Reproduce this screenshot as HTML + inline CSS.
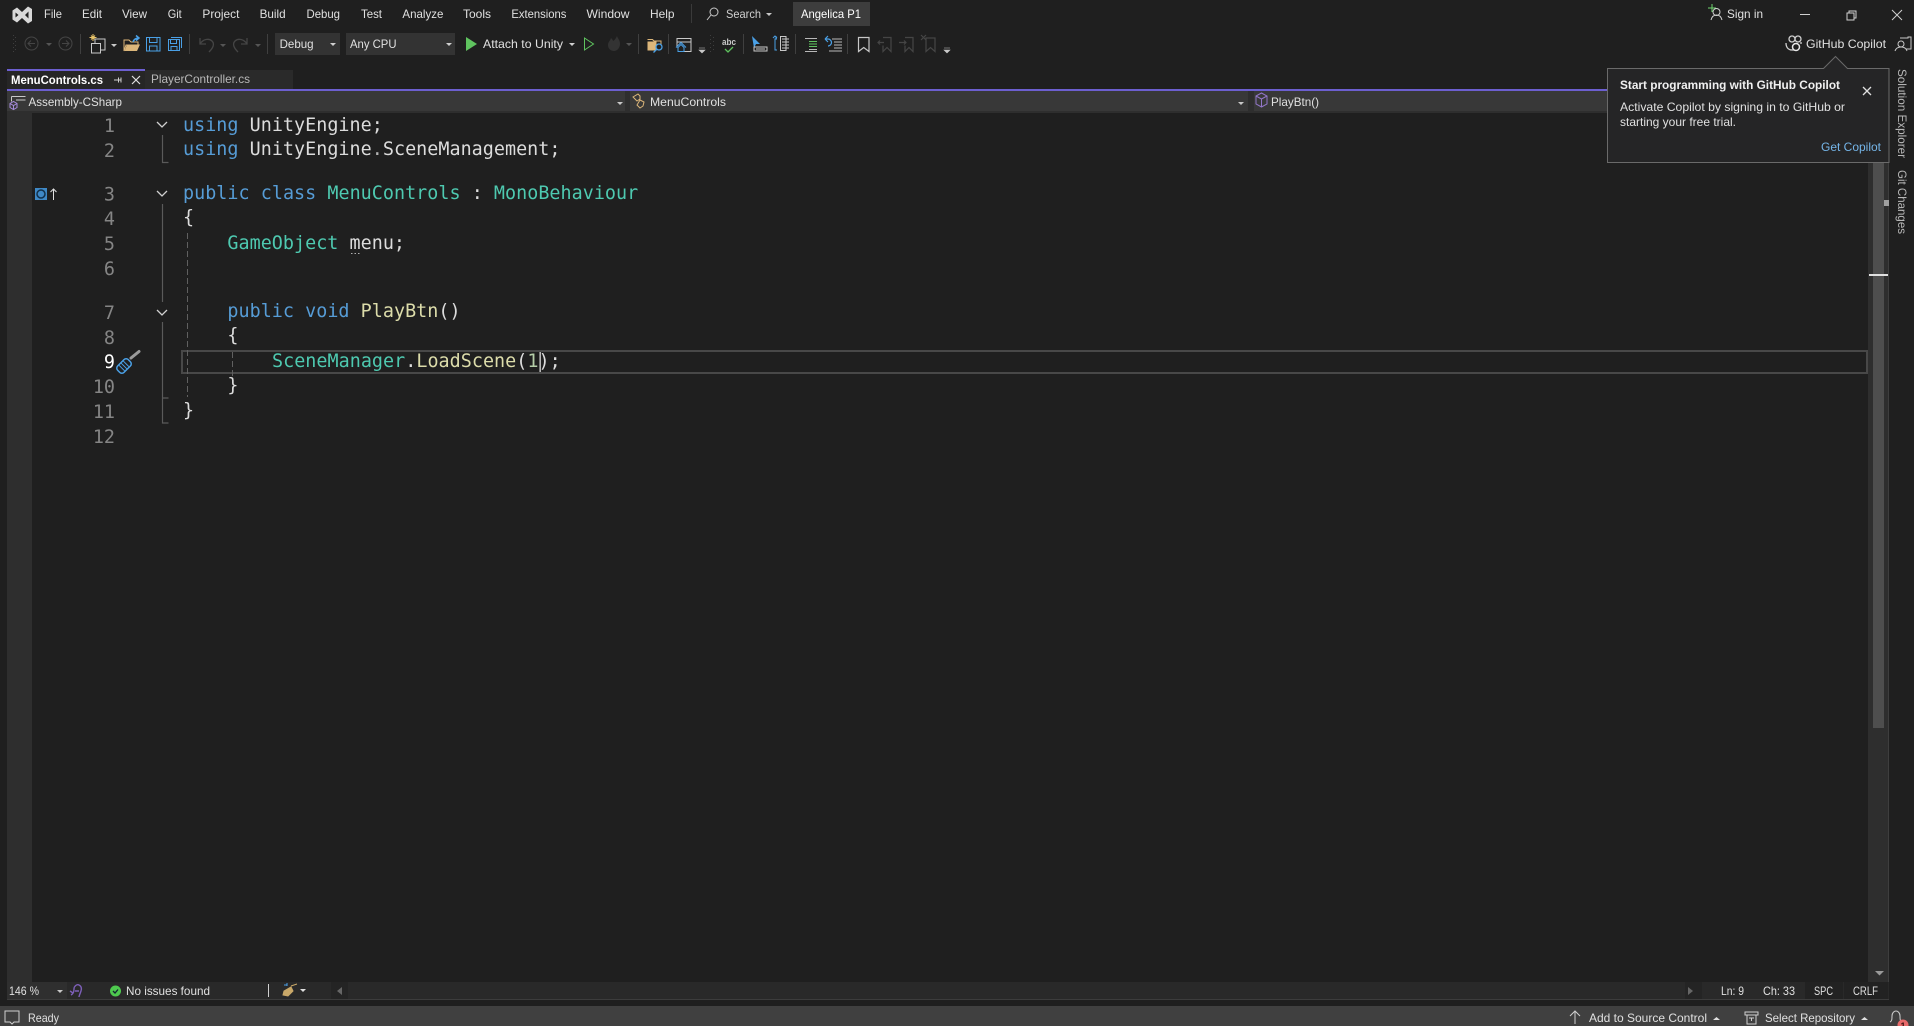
<!DOCTYPE html>
<html><head><meta charset="utf-8"><title>MenuControls.cs</title>
<style>
html,body{margin:0;padding:0;background:#1f1f1f;width:1914px;height:1026px;overflow:hidden}
svg{position:absolute;left:0;top:0;display:block}
text{font-family:"Liberation Sans",sans-serif;font-size:12px;fill:#e0e0e0;white-space:pre}
.m{font-family:"DejaVu Sans Mono","Liberation Mono",monospace;font-size:18.4px;fill:#dcdcdc;letter-spacing:.03px}
.n{font-family:"DejaVu Sans Mono","Liberation Mono",monospace;font-size:18.4px;fill:#858585;text-anchor:end}
.k{fill:#569cd6}.t{fill:#4ec9b0}.f{fill:#dcdcaa}.c{fill:#b5cea8}
.b{font-weight:bold}
</style></head><body>
<svg width="1914" height="1026" viewBox="0 0 1914 1026" xmlns="http://www.w3.org/2000/svg">
<rect width="1914" height="1026" fill="#1f1f1f"/>

<!-- logo -->
<path d="M12.500 10.500 L17 7.500 L22 12 L28 6.500 L32 9 V21 L28 23.500 L22 18 L17 22.500 L12.500 19.500Z" fill="#d8d8d8"/>
<path d="M15.500 12.500 V17.500 L18.500 15Z M25 15 L28.500 11.500 V18.500Z" fill="#1f1f1f"/>

<!-- menu -->
<text x="44" y="18" lengthAdjust="spacingAndGlyphs" textLength="18">File</text><text x="82" y="18" lengthAdjust="spacingAndGlyphs" textLength="20">Edit</text><text x="122" y="18" lengthAdjust="spacingAndGlyphs" textLength="25">View</text><text x="167.700" y="18" lengthAdjust="spacingAndGlyphs" textLength="14">Git</text><text x="202.400" y="18" lengthAdjust="spacingAndGlyphs" textLength="37">Project</text><text x="259.600" y="18" lengthAdjust="spacingAndGlyphs" textLength="26">Build</text><text x="306.500" y="18" lengthAdjust="spacingAndGlyphs" textLength="33.500">Debug</text><text x="361" y="18" lengthAdjust="spacingAndGlyphs" textLength="21">Test</text><text x="402.400" y="18" lengthAdjust="spacingAndGlyphs" textLength="41">Analyze</text><text x="463" y="18" lengthAdjust="spacingAndGlyphs" textLength="28">Tools</text><text x="511.400" y="18" lengthAdjust="spacingAndGlyphs" textLength="55">Extensions</text><text x="586.500" y="18" lengthAdjust="spacingAndGlyphs" textLength="43">Window</text><text x="650" y="18" lengthAdjust="spacingAndGlyphs" textLength="24.500">Help</text>
<rect x="691" y="4" width="1" height="19" fill="#3a3a3a"/>
<circle cx="714" cy="12" r="4" fill="none" stroke="#c8c8c8"/><path d="M711 15 L707 20" stroke="#c8c8c8" fill="none"/>
<text x="726" y="18" lengthAdjust="spacingAndGlyphs" textLength="35" style="fill:#d0d0d0">Search</text><path d="M766 13h6l-3 3z" fill="#c8c8c8"/>
<rect x="793" y="2" width="77" height="24" fill="#3d3d3d"/><text x="801" y="18" lengthAdjust="spacingAndGlyphs" textLength="60" style="fill:#fff">Angelica P1</text>

<!-- sign in / window -->
<path d="M1708 8h8M1712 4v8" stroke="#6fd66f" fill="none"/>
<circle cx="1716.500" cy="12" r="3.500" fill="none" stroke="#d0d0d0"/><path d="M1711 20c1-4 3-5 5.500-5s4.500 1 5.500 5" stroke="#d0d0d0" fill="none"/>
<text x="1727" y="18" lengthAdjust="spacingAndGlyphs" textLength="36">Sign in</text>
<path d="M1800 14.500h10" stroke="#d0d0d0"/>
<path d="M1847 13h7v7h-7zM1849 13v-2h7v7h-2" stroke="#d0d0d0" fill="none"/>
<path d="M1892 10l10 10M1902 10l-10 10" stroke="#d0d0d0" fill="none"/>

<!-- toolbar left -->
<g fill="#3f3f3f"><rect x="13" y="35" width="1" height="1"/><rect x="15" y="37" width="1" height="1"/><rect x="13" y="39" width="1" height="1"/><rect x="15" y="41" width="1" height="1"/><rect x="13" y="43" width="1" height="1"/><rect x="15" y="45" width="1" height="1"/><rect x="13" y="47" width="1" height="1"/><rect x="15" y="49" width="1" height="1"/><rect x="13" y="51" width="1" height="1"/></g>
<g fill="none" stroke="#454545"><circle cx="31.500" cy="43.500" r="6.500"/><path d="M35 43.500h-7M31 40.500l-3 3 3 3"/><circle cx="65.500" cy="43.500" r="6.500"/><path d="M62 43.500h7M66 40.500l3 3-3 3"/></g>
<path d="M46 43h6l-3 3z" fill="#555"/>
<rect x="80" y="34" width="1" height="20" fill="#3f3f3f"/>
<path d="M93 34v7M89.500 37.500h7M91 35.500l4 4M95 35.500l-4 4" stroke="#e8c46a" fill="none"/>
<path d="M95 39h10v11h-4M95 39v4" stroke="#c8c8c8" fill="none"/><rect x="91.500" y="43.500" width="9" height="9.500" fill="#1f1f1f" stroke="#c8c8c8"/>
<path d="M111 44h6l-3 3z" fill="#c8c8c8"/>
<path d="M124 40h5l2 2h7v3h-12l-2 6z" fill="none" stroke="#dcb67a"/><path d="M124.500 51l2.500-6.500h13l-3 6.500z" fill="#dcb67a"/>
<path d="M133 42c1-3 3-4 6-4M136 35.500l3 2.500-3 2.500" stroke="#4aa0e6" fill="none" stroke-width="1.500"/>
<path d="M146.500 37.500h13.500v13.500h-13.500zM149.500 37.500v5h7.500v-5M149.500 51v-5h7.500v5" stroke="#4aa0e6" fill="none"/>
<path d="M168.500 39.500h11v11h-11zM170.500 39.500v4h6v-4M171 50.500v-4h6v4M171 37.500h10.500v10.500" stroke="#4aa0e6" fill="none"/>
<rect x="189" y="34" width="1" height="20" fill="#3f3f3f"/>
<g stroke="#454545" fill="none" stroke-width="1.300"><path d="M200 38v6h6M200 44c3-5 9-6 12-3s1 7-3 11"/><path d="M247 38v6h-6M247 44c-3-5-9-6-12-3s-1 7 3 11"/></g>
<path d="M220 44h6l-3 3zM255 44h6l-3 3z" fill="#555"/>
<rect x="267" y="34" width="1" height="20" fill="#3f3f3f"/>

<!-- combos -->
<rect x="275" y="33" width="65" height="22" fill="#333"/><text x="279.600" y="48" lengthAdjust="spacingAndGlyphs" textLength="34">Debug</text><path d="M330 43h6l-3 3z" fill="#d0d0d0"/>
<rect x="346" y="33" width="109" height="22" fill="#333"/><text x="350" y="48" lengthAdjust="spacingAndGlyphs" textLength="46.500">Any CPU</text><path d="M446 43h6l-3 3z" fill="#d0d0d0"/>
<path d="M466 37l11 7-11 7z" fill="#5fc35f"/>
<text x="483" y="48" lengthAdjust="spacingAndGlyphs" textLength="80">Attach to Unity</text><path d="M569 43h6l-3 3z" fill="#d0d0d0"/>
<path d="M584.500 38l9 6-9 6z" fill="none" stroke="#5fc35f"/>
<path d="M617 36c1 3 3 4 3 8 0 4-3 7-6 7s-6-2-6-6c0-3 2-4 3-7 1 1 2 2 2 3 2-1 3-3 4-5z" fill="#333"/>
<path d="M626 43h6l-3 3z" fill="#555"/>
<rect x="638" y="34" width="1" height="20" fill="#3f3f3f"/>

<!-- toolbar right -->
<path d="M647.500 39.500h5l1.500 1.500h7v5" fill="none" stroke="#dcb67a"/><path d="M647.500 41.500h9v9h-9z" fill="#dcb67a"/>
<circle cx="659" cy="47" r="3" fill="#1f1f1f" stroke="#4aa0e6" stroke-width="1.300"/><path d="M657 49l-3.500 3.500" stroke="#4aa0e6" stroke-width="1.300"/>
<rect x="668" y="34" width="1" height="20" fill="#3f3f3f"/>
<path d="M682 51.500h9V38.500h-14v9M677 42h14" fill="none" stroke="#c8c8c8"/>
<path d="M678 51.500v-4l3-3 3 3v4z" fill="none" stroke="#4aa0e6"/><path d="M676 47.500l5-5 5 5" fill="none" stroke="#4aa0e6"/>
<path d="M699 48h6M699 50h6l-3 3z" fill="#c8c8c8" stroke="#c8c8c8" stroke-width=".6"/>
<g fill="#3f3f3f"><rect x="710" y="35" width="1" height="1"/><rect x="713" y="37" width="1" height="1"/><rect x="710" y="39" width="1" height="1"/><rect x="713" y="41" width="1" height="1"/><rect x="710" y="43" width="1" height="1"/><rect x="713" y="45" width="1" height="1"/><rect x="710" y="47" width="1" height="1"/><rect x="713" y="49" width="1" height="1"/><rect x="710" y="51" width="1" height="1"/></g>
<text x="722" y="45" lengthAdjust="spacingAndGlyphs" textLength="14" style="font-size:9.500px;font-weight:bold;fill:#c8c8c8">abc</text>
<path d="M725 49l3 3 5-5" fill="none" stroke="#5fc35f" stroke-width="1.300"/>
<rect x="743" y="34" width="1" height="20" fill="#3f3f3f"/>
<path d="M752 36l8 8h-4l-2 4z" fill="#4aa0e6"/><path d="M754 47h13v4h-13z" fill="none" stroke="#c8c8c8"/><path d="M756 49h9" stroke="#c8c8c8"/>
<path d="M777 39h-2v11h2M776 36v3M773 38l2-2 2 2" fill="none" stroke="#4aa0e6"/><path d="M780.500 36.500h5.500v14h-5.500zM782 39h7M782 42h7M782 45h7M782 48h7" fill="none" stroke="#c8c8c8"/>
<rect x="795" y="34" width="1" height="20" fill="#3f3f3f"/>
<path d="M805 38.500h12M809 49.500h8M805 51.500h12" stroke="#b8b8b8" fill="none" stroke-width=".9"/><path d="M809 41.500h8M809 44h8M809 46.500h8" stroke="#5fc35f" fill="none" stroke-width=".9"/>
<path d="M832 39h10M834 42h8M834 45h8M834 48h8M829 51h13" stroke="#b8b8b8" fill="none" stroke-width=".9"/><path d="M825 39h3a3 3 0 0 1 0 7M825 39l3-3M825 39l3 3" stroke="#4aa0e6" fill="none" stroke-width="1.200"/>
<rect x="847" y="34" width="1" height="20" fill="#3f3f3f"/>
<path d="M858.500 37.500h10.500v14l-5.250-4-5.250 4z" fill="none" stroke="#c8c8c8" stroke-width="1.200"/>
<g fill="none" stroke="#454545" stroke-width="1.200"><path d="M883 37.500h8v14l-4-4-4 4v-6M884 42.500h-6M880 40.500l-2 2 2 2"/><path d="M905 37.500h8v14l-4-4-4 4v-6M899 42.500h7M904 40.500l2 2-2 2"/><path d="M926 38h9v13.500l-4.500-4-4.500 4zM921 35l5 5M926 35l-5 5"/></g>
<path d="M944 48h6M944 50h6l-3 3z" fill="#c8c8c8" stroke="#c8c8c8" stroke-width=".6"/>

<!-- copilot -->
<g fill="none" stroke="#d0d0d0" stroke-width="1.300"><circle cx="1792" cy="39" r="3"/><circle cx="1798" cy="39" r="3"/><path d="M1786 43c0 6 4 7 6 7h4"/><path d="M1801 42v2"/></g><circle cx="1796" cy="47" r="3.500" fill="#1f1f1f" stroke="#e8e8e8" stroke-width="1.500"/>
<text x="1806" y="48" lengthAdjust="spacingAndGlyphs" textLength="80">GitHub Copilot</text>
<path d="M1900 38h8v-1h3v12h-5" fill="none" stroke="#c8c8c8"/><circle cx="1901" cy="44" r="3" fill="#1f1f1f" stroke="#c8c8c8"/><path d="M1895 51c1-3 3-4 6-4s5 1 6 4" fill="none" stroke="#c8c8c8"/>

<!-- tabs -->
<rect x="7" y="69" width="138" height="20" fill="#262626"/><rect x="7" y="69" width="138" height="2" fill="#6c5fd0"/>
<rect x="145" y="70" width="148" height="19" fill="#2a2a2a"/>
<text x="11" y="84" class="b" lengthAdjust="spacingAndGlyphs" textLength="92" style="fill:#fff">MenuControls.cs</text>
<path d="M114 80h7M118.500 77.500v5M121 77.500v5" stroke="#d0d0d0" fill="none"/>
<path d="M132 76l8 8M140 76l-8 8" stroke="#e0e0e0" fill="none" stroke-width="1.200"/>
<text x="151" y="83" lengthAdjust="spacingAndGlyphs" textLength="99" style="fill:#b8b8b8">PlayerController.cs</text>
<rect x="7" y="89" width="1882" height="2" fill="#6c5fd0"/>

<!-- nav bar -->
<rect x="7" y="91" width="1882" height="22" fill="#2e2e2e"/>
<rect x="7" y="91" width="618" height="20" fill="#383838"/><rect x="630" y="91" width="618" height="20" fill="#383838"/><rect x="1254" y="91" width="620" height="20" fill="#383838"/>
<path d="M11.500 96.500h14M11.500 96.500v5M16 100h9.500" stroke="#c8c8c8" fill="none"/>
<path d="M10 103.500l3.500-2 3.500 2v4l-3.500 2-3.500-2zM10 103.500l3.500 2 3.500-2M13.500 105.500v4" fill="none" stroke="#a68bdc"/>
<text x="28.500" y="106" lengthAdjust="spacingAndGlyphs" textLength="93.500">Assembly-CSharp</text><path d="M617 102h6l-3 3z" fill="#c8c8c8"/>
<path d="M633 97l5-3 2 2v3l-3 2zM640 100l4 2-1 4-3 2-3-3z" fill="none" stroke="#dcb67a"/>
<text x="650" y="106" lengthAdjust="spacingAndGlyphs" textLength="76">MenuControls</text><path d="M1238 102h6l-3 3z" fill="#c8c8c8"/>
<path d="M1256 96l5.500-3 5.500 3v8l-5.500 3-5.500-3zM1256 96l5.500 3 5.500-3M1261.500 99v8" fill="none" stroke="#9276c8"/>
<text x="1271" y="106" lengthAdjust="spacingAndGlyphs" textLength="48">PlayBtn()</text>

<!-- gutter -->
<rect x="7" y="113" width="25" height="869" fill="#2e2e2e"/>

<!-- current line box -->
<rect x="182" y="351" width="1685" height="22" fill="none" stroke="#484848" stroke-width="2"/>

<!-- line numbers -->
<text class="n" x="115" y="132">1</text><text class="n" x="115" y="157">2</text><text class="n" x="115" y="200.500">3</text><text class="n" x="115" y="225">4</text><text class="n" x="115" y="250">5</text><text class="n" x="115" y="275">6</text><text class="n" x="115" y="319">7</text><text class="n" x="115" y="344">8</text><text class="n" x="115" y="368" style="fill:#fff">9</text><text class="n" x="115" y="393">10</text><text class="n" x="115" y="418">11</text><text class="n" x="115" y="443">12</text>

<!-- outline -->
<g fill="none" stroke="#d0d0d0" stroke-width="1.300"><path d="M157 122l5 5 5-5M157 191l5 5 5-5M157 310l5 5 5-5"/></g>
<g fill="none" stroke="#5a5a5a" stroke-width="1.200"><path d="M162.500 135v27.500h6M162.500 204v98M162.500 322v101h6M162.500 398h6"/></g>
<path d="M187.500 233V397M232.500 352V377" stroke="#606060" stroke-dasharray="6 3" fill="none"/>

<!-- code -->
<text class="m" x="183" y="131"><tspan class="k">using</tspan> UnityEngine;</text>
<text class="m" x="183" y="155"><tspan class="k">using</tspan> UnityEngine<tspan fill="#b4b4b4">.</tspan>SceneManagement;</text>
<text class="m" x="183" y="199"><tspan class="k">public</tspan> <tspan class="k">class</tspan> <tspan class="t">MenuControls</tspan> : <tspan class="t">MonoBehaviour</tspan></text>
<text class="m" x="183" y="223">{</text>
<text class="m" x="227.400" y="249"><tspan class="t">GameObject</tspan> menu;</text>
<path d="M351 253.500h1.500M354.500 253.500h1.500M358 253.500h1.500" stroke="#b0b0b0"/>
<text class="m" x="227.400" y="317"><tspan class="k">public</tspan> <tspan class="k">void</tspan> <tspan class="f">PlayBtn</tspan>()</text>
<text class="m" x="227.400" y="341">{</text>
<text class="m" x="272" y="367"><tspan class="t">SceneManager</tspan>.<tspan class="f">LoadScene</tspan>(<tspan class="c">1</tspan>);</text>
<rect x="539.500" y="352" width="1.300" height="20" fill="#dcdcdc"/>
<text class="m" x="227.400" y="391">}</text>
<text class="m" x="183" y="416">}</text>

<!-- screwdriver -->
<path d="M131 358L139 351.500" stroke="#9a9a9a" stroke-width="3" stroke-linecap="round" fill="none"/>
<g transform="rotate(45 124 366)"><rect x="119.500" y="358.500" width="9" height="15" rx="3" fill="#1f1f1f" stroke="#4aa0e6" stroke-width="1.500"/><path d="M120 363h8M120 366h8M120 369h8" stroke="#4aa0e6"/></g>

<!-- class marker -->
<rect x="35" y="188" width="12" height="12" fill="#3f88c5"/><circle cx="41" cy="194" r="4" fill="none" stroke="#12304a" stroke-width="1.500"/>
<path d="M53.500 200v-11M50.500 192l3-3 3 3" stroke="#e0e0e0" fill="none"/>

<!-- scrollbar -->
<rect x="1868" y="113" width="21" height="869" fill="#2e2e2e"/><rect x="1888" y="113" width="1" height="869" fill="#3e3e3e"/>
<rect x="1873" y="163" width="11" height="565" fill="#4e4e4e"/>
<rect x="1884" y="200" width="5" height="6" fill="#a0a0a0"/>
<rect x="1869" y="274" width="19" height="2" fill="#e0e0e0"/>
<path d="M1875 971h9l-4.500 4.500z" fill="#9a9a9a"/>

<!-- popup -->
<path d="M1607.500 68.500h216l12-12 12 12h41.500v94h-281.500z" fill="#252526" stroke="#6a6a6a"/>
<text x="1620" y="89" class="b" lengthAdjust="spacingAndGlyphs" textLength="220" style="fill:#f0f0f0">Start programming with GitHub Copilot</text>
<text x="1620" y="111" lengthAdjust="spacingAndGlyphs" textLength="225">Activate Copilot by signing in to GitHub or</text>
<text x="1620" y="126" lengthAdjust="spacingAndGlyphs" textLength="116">starting your free trial.</text>
<text x="1821" y="151" lengthAdjust="spacingAndGlyphs" textLength="60" style="fill:#75b5e8">Get Copilot</text>
<path d="M1863 87l8 8M1871 87l-8 8" stroke="#e0e0e0" fill="none" stroke-width="1.300"/>

<!-- side -->
<text transform="translate(1898 69) rotate(90)" lengthAdjust="spacingAndGlyphs" textLength="89" style="fill:#b8b8b8">Solution Explorer</text>
<text transform="translate(1898 170) rotate(90)" lengthAdjust="spacingAndGlyphs" textLength="64" style="fill:#b8b8b8">Git Changes</text>

<!-- editor status -->
<rect x="7" y="982" width="1882" height="17" fill="#292929"/><rect x="7" y="999" width="1882" height="1" fill="#3c3c3c"/>
<rect x="7" y="982" width="60" height="17" fill="#2f2f2f"/>
<text x="9" y="995" lengthAdjust="spacingAndGlyphs" textLength="30">146 %</text><path d="M57 990h6l-3 3z" fill="#c8c8c8"/>
<path d="M71 995c2-1 3-3 3-6 0-3 3-5 5-4s3 3 2 6-2 5-2 6M75 991h4M70 991l3 2" fill="none" stroke="#7d5fb8" stroke-width="1.400"/>
<circle cx="115.500" cy="991" r="5.500" fill="#4ec94e"/><path d="M113 991l2 2 3-3.500" stroke="#123" fill="none" stroke-width="1.300"/>
<text x="126" y="995" lengthAdjust="spacingAndGlyphs" textLength="84">No issues found</text>
<rect x="268" y="984" width="1" height="13" fill="#d0d0d0"/>
<path d="M291 986l6-2M284 991l7-4 2 4-5 5-5-1z" fill="#c9a869" stroke="#c9a869"/><path d="M284 985h3M287 983v3" stroke="#4aa0e6"/>
<path d="M300 989h6l-3 3z" fill="#e0e0e0"/>
<rect x="331" y="982" width="17" height="17" fill="#242424"/><path d="M342 987v8l-5-4z" fill="#666"/>
<rect x="1685" y="982" width="17" height="17" fill="#242424"/><path d="M1688 987v8l5-4z" fill="#666"/>
<text x="1721" y="995" lengthAdjust="spacingAndGlyphs" textLength="23">Ln: 9</text><text x="1763" y="995" lengthAdjust="spacingAndGlyphs" textLength="32">Ch: 33</text>
<rect x="1805" y="982" width="38" height="17" fill="#222"/><rect x="1844" y="982" width="44" height="17" fill="#222"/>
<text x="1814" y="995" lengthAdjust="spacingAndGlyphs" textLength="19">SPC</text><text x="1853" y="995" lengthAdjust="spacingAndGlyphs" textLength="25">CRLF</text>

<!-- status bar -->
<rect x="0" y="1006" width="1914" height="20" fill="#404040"/>
<path d="M5 1011h14v11h-5l-2 2-2-2h-5z" fill="none" stroke="#d0d0d0"/>
<text x="28" y="1022" lengthAdjust="spacingAndGlyphs" textLength="31">Ready</text>
<path d="M1575 1024v-13M1570 1016l5-5 5 5" stroke="#d0d0d0" fill="none"/>
<text x="1589" y="1022" lengthAdjust="spacingAndGlyphs" textLength="118">Add to Source Control</text><path d="M1713 1020h7l-3.500-3z" fill="#e0e0e0"/>
<path d="M1745 1012h13v3h-13zM1747 1015v9h9v-9M1751.500 1018v3M1749 1018h5" stroke="#d0d0d0" fill="none"/>
<text x="1765" y="1022" lengthAdjust="spacingAndGlyphs" textLength="90">Select Repository</text><path d="M1861 1020h7l-3.500-3z" fill="#e0e0e0"/>
<path d="M1890 1022c2-1 2-3 2-6 0-3 2-5 4-5s4 2 4 5c0 3 0 5 2 6" fill="none" stroke="#d0d0d0"/>
<circle cx="1903" cy="1025" r="5.500" fill="#e86a6a"/>
<text x="1903" y="1029" text-anchor="middle" class="b" style="font-size:9px;fill:#3a1010">1</text>
</svg>
</body></html>
